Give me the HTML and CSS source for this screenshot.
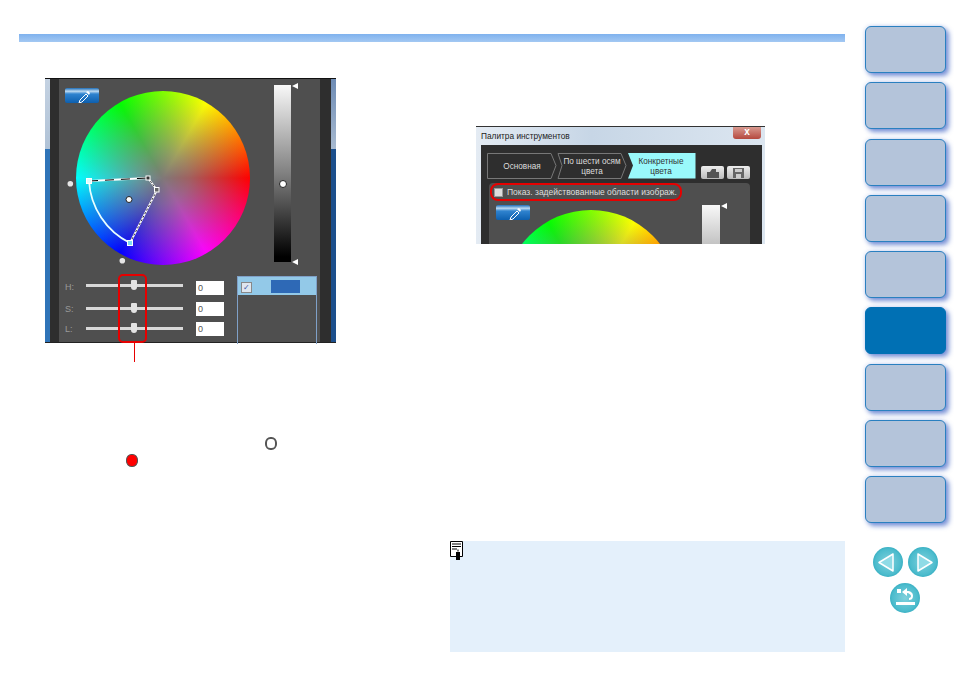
FILE: index.html
```html
<!DOCTYPE html>
<html lang="en">
<head>
    <meta charset="UTF-8">
    <title>Палитра инструментов</title>
    <link rel="stylesheet" href="styles.css">
</head>
<body>
    <div class="page">
        <div class="main">
            <div class="top-bar"></div>
            <div class="columns">
                <div class="col-left">
                    <div class="shot">
                        <div class="stripe stripe-left"></div>
                        <div class="dark-side"></div>
                        <div class="panel-body">
                            <div class="drop-btn drop-btn-main">
                                <svg width="34" height="15" viewBox="0 0 34 15"><path d="M15 12l6-6 2 2-6 6-3 1z" fill="none" stroke="#fff" stroke-width="1"/><path d="M21 4l2-1 2 2-1 2z" fill="#fff"/></svg>
                            </div>
                            <div class="wheel-row">
                                <div class="wheel">
                                    <svg class="wheel-marks" width="174" height="174" viewBox="0 0 174 174">
                                        <path d="M13 90L72 87" stroke="#fff" stroke-width="1.8" fill="none"/>
                                        <path d="M13 90L72 87" stroke="#000" stroke-width="1" stroke-dasharray="9 7" fill="none"/>
                                        <path d="M72 87L81 99L54 152" stroke="#fff" stroke-width="1.8" fill="none"/>
                                        <path d="M72 87L81 99L54 152" stroke="#000" stroke-width="0.8" stroke-dasharray="2 2" fill="none"/>
                                        <path d="M13 90A74 74 0 0 0 54 152" stroke="#e8ffff" stroke-width="1.8" fill="none"/>
                                        <rect x="10.5" y="87.5" width="5" height="5" fill="#dff" stroke="#fff"/>
                                        <rect x="51.5" y="149.5" width="5" height="5" fill="#7fdcf5" stroke="#fff"/>
                                        <rect x="70" y="85" width="4" height="4" fill="#333" stroke="#fff" />
                                        <rect x="78.5" y="96.5" width="4.5" height="4.5" fill="#666" stroke="#fff"/>
                                        <circle cx="53" cy="108.5" r="3" fill="#fff" stroke="#222"/>
                                        <circle cx="-5.7" cy="92.7" r="2.8" fill="#e6e6e6"/>
                                        <circle cx="46.3" cy="169.7" r="2.8" fill="#e6e6e6"/>
                                    </svg>
                                </div>
                                <div class="gray-bar">
                                    <span class="bar-arrow bar-arrow-top"></span>
                                    <span class="bar-knob"></span>
                                    <span class="bar-arrow bar-arrow-bottom"></span>
                                </div>
                            </div>
                            <div class="controls">
                                <div class="sliders">
                                    <div class="slider-row">
                                        <span class="slider-label">H:</span>
                                        <div class="track"><span class="thumb"></span></div>
                                        <div class="num">0</div>
                                    </div>
                                    <div class="slider-row">
                                        <span class="slider-label">S:</span>
                                        <div class="track"><span class="thumb"></span></div>
                                        <div class="num">0</div>
                                    </div>
                                    <div class="slider-row">
                                        <span class="slider-label">L:</span>
                                        <div class="track"><span class="thumb"></span></div>
                                        <div class="num">0</div>
                                    </div>
                                </div>
                                <div class="color-list">
                                    <div class="color-row">
                                        <span class="check-box">✓</span>
                                        <span class="swatch"></span>
                                    </div>
                                </div>
                            </div>
                        </div>
                        <div class="dark-side dark-side-right"></div>
                        <div class="stripe stripe-right"></div>
                        <div class="red-mark"></div>
                    </div>
                    <div class="red-line"></div>
                    <div class="icon-row icon-row-ring"><span class="ring-icon"></span></div>
                    <div class="icon-row icon-row-dot"><span class="red-icon"></span></div>
                </div>

                <div class="col-right">
                    <div class="window">
                        <div class="win-title">
                            <span>Палитра инструментов</span>
                            <span class="win-close">x</span>
                        </div>
                        <div class="win-inner">
                            <div class="tabs-row">
                                <svg class="tabs" width="209" height="26" viewBox="0 0 209 26">
                                    <path d="M0.5 0.5H64L69 12.500L64 25.500H0.500Z" fill="none" stroke="#777"/>
                                    <path d="M71 0.500H134L139 12.500L134 25.500H71L75 12.500Z" fill="none" stroke="#777"/>
                                    <path d="M141 0H208.500V25.500H141L146 12.500Z" fill="#99f9fb"/>
                                    <text x="35" y="16" class="tab-text" text-anchor="middle" fill="#ddd">Основная</text>
                                    <text x="105" y="11" class="tab-text" text-anchor="middle" fill="#ddd">По шести осям</text>
                                    <text x="105" y="21" class="tab-text" text-anchor="middle" fill="#ddd">цвета</text>
                                    <text x="174" y="11" class="tab-text" text-anchor="middle" fill="#333">Конкретные</text>
                                    <text x="174" y="21" class="tab-text" text-anchor="middle" fill="#333">цвета</text>
                                </svg>
                                <span class="tool-btn">
                                    <svg width="14" height="10" viewBox="0 0 14 10"><path d="M1 4h12v6H1zM4 4l2-3h4v3z" fill="#555"/></svg>
                                </span>
                                <span class="tool-btn">
                                    <svg width="11" height="10" viewBox="0 0 11 10"><path d="M0 0h11v10H0z" fill="#666"/><path d="M2 1h7v3H2zM3 6h5v4H3z" fill="#ccc"/></svg>
                                </span>
                            </div>
                            <div class="win-panel">
                                <div class="show-row">
                                    <span class="show-check"></span>
                                    <span class="show-text">Показ. задействованные области изображ.</span>
                                </div>
                                <div class="drop-btn drop-btn-win">
                                    <svg width="34" height="15" viewBox="0 0 34 15"><path d="M15 12l6-6 2 2-6 6-3 1z" fill="none" stroke="#fff" stroke-width="1"/><path d="M21 4l2-1 2 2-1 2z" fill="#fff"/></svg>
                                </div>
                                <div class="wheel wheel-win"></div>
                                <div class="gray-bar gray-bar-win">
                                    <span class="bar-arrow bar-arrow-top"></span>
                                </div>
                            </div>
                        </div>
                    </div>
                    <div class="note">
                        <svg width="14" height="19" viewBox="0 0 14 19">
                            <path d="M0.500 0.500H12.500V15.500H0.500Z" fill="#fff" stroke="#000"/>
                            <path d="M2 3h9M2 5.500h9M2 8h5" stroke="#000" fill="none"/>
                            <path d="M6 11h4v8H6z" fill="#000"/>
                            <path d="M7 8.500h2v2H7z" fill="#777"/>
                        </svg>
                    </div>
                </div>
            </div>
        </div>

        <div class="sidebar">
            <div class="nav-box"></div>
            <div class="nav-box"></div>
            <div class="nav-box"></div>
            <div class="nav-box"></div>
            <div class="nav-box"></div>
            <div class="nav-box active"></div>
            <div class="nav-box"></div>
            <div class="nav-box"></div>
            <div class="nav-box"></div>
            <div class="arrows">
                <span class="round-btn">
                    <svg width="30" height="30" viewBox="0 0 30 30"><path d="M6 15.500L20 7V24Z" fill="#8fdbe6" stroke="#fff" stroke-width="1.500" stroke-linejoin="round"/></svg>
                </span>
                <span class="round-btn">
                    <svg width="30" height="30" viewBox="0 0 30 30"><path d="M24 15.500L10 7V24Z" fill="#8fdbe6" stroke="#fff" stroke-width="1.500" stroke-linejoin="round"/></svg>
                </span>
            </div>
            <div class="arrows">
                <span class="round-btn">
                    <svg width="30" height="30" viewBox="0 0 30 30">
                        <path d="M7 6h4v4H7z" fill="#fff"/>
                        <path d="M12 9l5-4v3c4 0 6 2 6 5s-2 4-4 4v-2c1 0 2-1 2-2s-2-3-4-3v3z" fill="#fff"/>
                        <path d="M6 19h19v3H6z" fill="#fff"/>
                    </svg>
                </span>
            </div>
        </div>
    </div>
</body>
</html>
```

FILE: styles.css
```css
body {
    margin: 0;
    background: white;
    font-family: "Liberation Sans", Arial, sans-serif;
}
.page {
    display: flex;
    width: 954px;
    height: 674px;
    overflow: hidden;
}
.main {
    width: 826px;
    margin-left: 19px;
    padding-top: 34px;
}
.top-bar {
    height: 8px;
    background: linear-gradient(to bottom, #7fb2ee, #a3c8f2);
}
.columns {
    display: flex;
}
.col-left {
    width: 431px;
    padding-top: 36px;
}
.col-right {
    width: 395px;
}

/* left screenshot */
.shot {
    position: relative;
    display: flex;
    width: 291px;
    height: 265px;
    margin-left: 26px;
    border-top: 1px solid #111;
    border-bottom: 1px solid #222;
    box-sizing: border-box;
    background: #4f4f4f;
}
.stripe {
    width: 5px;
}
.stripe-left {
    background: linear-gradient(to bottom, #c4d2e2 0, #b0c2d6 70px, #2f74b8 70px);
}
.stripe-right {
    background: linear-gradient(to bottom, #6d8bb4 0, #a8bad0 70px, #1c4f8c 70px);
}
.dark-side {
    width: 9px;
    background: #2e2e2e;
}
.dark-side-right {
    width: 11px;
}
.panel-body {
    position: relative;
    width: 261px;
    background: #4f4f4f;
}
.drop-btn {
    position: absolute;
    left: 6px;
    top: 9px;
    width: 34px;
    height: 15px;
    border-radius: 2px;
    background: linear-gradient(to bottom, #1d6db8 0, #bcd9f0 22%, #2f83cf 40%, #0d5fae 100%);
}
.drop-btn svg {
    display: block;
}
.wheel-row {
    display: flex;
    align-items: flex-start;
    padding-left: 17px;
}
.wheel {
    position: relative;
    flex: none;
    width: 174px;
    height: 174px;
    margin-top: 12px;
    border-radius: 50%;
    background:
        radial-gradient(circle closest-side, #807878 0, rgba(128,128,128,0.75) 30%, rgba(128,128,128,0) 100%),
        conic-gradient(from 90deg, #f00, #f0f, #00f, #0ff, #0f0, #ff0, #f00);
}
.wheel-marks {
    position: absolute;
    left: 0;
    top: 0;
    overflow: visible;
}
.gray-bar {
    position: relative;
    flex: none;
    width: 17px;
    height: 177px;
    margin-top: 6px;
    margin-left: 24px;
    background: linear-gradient(to bottom, #f8f8f8, #808080 50%, #000 97%);
}
.bar-arrow {
    position: absolute;
    right: -7px;
    width: 0;
    height: 0;
    border-top: 3.500px solid transparent;
    border-bottom: 3.500px solid transparent;
    border-right: 6px solid #fff;
}
.bar-arrow-top {
    top: -2px;
}
.bar-arrow-bottom {
    bottom: -3px;
}
.bar-knob {
    position: absolute;
    left: 5px;
    top: 95px;
    width: 6px;
    height: 6px;
    border-radius: 50%;
    background: #fff;
    border: 1px solid #222;
}
.controls {
    display: flex;
    margin-top: 11px;
}
.sliders {
    width: 172px;
    padding-left: 6px;
    padding-top: 5px;
}
.slider-row {
    display: flex;
    align-items: center;
    height: 14px;
    margin-bottom: 6.500px;
    color: #9a9a9a;
    font-size: 9px;
}
.slider-label {
    width: 21px;
}
.slider-row:first-child .slider-label {
    margin-top: -3px;
}
.track {
    position: relative;
    width: 97px;
    height: 3px;
    margin-top: -1px;
    background: #d8d8d8;
}
.slider-row:first-child .track {
    margin-top: -5px;
}
.thumb {
    position: absolute;
    left: 45px;
    top: -4px;
    width: 6px;
    height: 10px;
    border-radius: 1px 1px 3px 3px;
    background: #e2e2e2;
}
.num {
    width: 26px;
    height: 14px;
    margin-left: 13px;
    padding-left: 2px;
    background: white;
    color: #555;
    font-size: 9px;
    line-height: 14px;
}
.color-list {
    width: 78px;
    height: 67px;
    border: 1px solid #7fa0c8;
    border-bottom: none;
}
.color-row {
    display: flex;
    align-items: center;
    height: 18px;
    padding-left: 3px;
    background: #93c9e8;
}
.check-box {
    width: 9px;
    height: 9px;
    margin-top: 3px;
    background: #dfe6ee;
    border: 0.500px solid #888;
    color: #3a55a8;
    font-size: 8px;
    line-height: 9px;
    text-align: center;
}
.swatch {
    width: 29px;
    height: 13px;
    margin-left: 19px;
    background: #2e69b6;
}
.red-mark {
    position: absolute;
    left: 73px;
    top: 195px;
    width: 25px;
    height: 65px;
    border: 2px solid #e60000;
    border-radius: 5px;
}
.red-line {
    width: 1px;
    height: 19px;
    margin-left: 115px;
    background: #e60000;
}
.icon-row {
    display: flex;
}
.icon-row-ring {
    padding-left: 246px;
    margin-top: 75px;
}
.icon-row-dot {
    padding-left: 107px;
    margin-top: 4px;
}
.ring-icon {
    box-sizing: border-box;
    width: 12px;
    height: 13px;
    border: 2px solid #555;
    border-radius: 45%;
    background: white;
}
.red-icon {
    box-sizing: border-box;
    width: 12px;
    height: 13px;
    border: 1.500px solid #555;
    border-radius: 45%;
    background: #f00;
}

/* right screenshot */
.window {
    box-sizing: border-box;
    width: 289px;
    height: 118px;
    margin-top: 84px;
    margin-left: 26px;
    border-top: 1px solid #333;
    background: linear-gradient(to right, #e4ebf3, #c7d6e6 40%, #dce6f0);
    overflow: hidden;
}
.win-title {
    display: flex;
    justify-content: space-between;
    height: 18px;
    padding-left: 5px;
    color: #222;
    font-size: 8.300px;
    line-height: 19px;
}
.win-close {
    width: 28px;
    height: 12px;
    margin-right: 4px;
    border-radius: 0 0 3px 3px;
    background: linear-gradient(to bottom, #d99a90, #b5483e);
    color: white;
    font-size: 10px;
    font-weight: bold;
    line-height: 10px;
    text-align: center;
}
.win-inner {
    height: 100px;
    margin: 0 3px 0 5px;
    padding: 8px 0 0 6px;
    background: #2e2e2e;
    box-sizing: border-box;
}
.tabs-row {
    display: flex;
    align-items: flex-end;
    gap: 3px;
}
.tabs {
    display: block;
    margin-right: 2px;
}
.tab-text {
    font-family: "Liberation Sans", Arial, sans-serif;
    font-size: 8.200px;
}
.tool-btn {
    display: flex;
    align-items: center;
    justify-content: center;
    width: 23px;
    height: 13px;
    border-radius: 2px;
    background: linear-gradient(to bottom, #eee, #bbb);
}
.win-panel {
    position: relative;
    width: 261px;
    height: 70px;
    margin-top: 4px;
    margin-left: 2px;
    border-radius: 4px 4px 0 0;
    background: #4f4f4f;
    overflow: hidden;
}
.show-row {
    display: flex;
    align-items: center;
    box-sizing: border-box;
    width: 192px;
    height: 18px;
    margin-left: 1px;
    padding-left: 2px;
    border: 2.500px solid #e60000;
    border-radius: 8px;
}
.show-check {
    flex: none;
    box-sizing: border-box;
    width: 9px;
    height: 9px;
    margin-right: 4px;
    background: #ddd;
    border: 1px solid #999;
}
.show-text {
    color: #ddd;
    font-size: 8.500px;
    white-space: nowrap;
}
.drop-btn-win {
    left: 7px;
    top: 22px;
}
.wheel-win {
    margin-top: 9px;
    margin-left: 15px;
}
.gray-bar-win {
    position: absolute;
    left: 213px;
    top: 22px;
    width: 18px;
    margin: 0;
}
.note {
    height: 111px;
    margin-top: 297px;
    background: #e4f0fb;
}
.note svg {
    display: block;
}

/* side navigation */
.sidebar {
    width: 81px;
    margin-left: 20px;
    padding-top: 26px;
}
.nav-box {
    box-sizing: border-box;
    height: 47px;
    margin-bottom: 9.300px;
    background: #b4c4da;
    border: 1.500px solid #2a80c0;
    border-radius: 6px;
    box-shadow: 3px 3px 5px rgba(40,80,190,0.6), 0 0 4px rgba(60,100,200,0.25);
}
.nav-box.active {
    background: #0070b4;
    border-color: #0070b4;
}
.arrows {
    display: flex;
    justify-content: center;
    gap: 5px;
    padding-right: 1px;
}
.nav-box + .arrows {
    margin-top: 24px;
}
.arrows + .arrows {
    margin-top: 6px;
}
.round-btn {
    width: 30px;
    height: 30px;
    border-radius: 50%;
    background: radial-gradient(circle at 50% 50%, #7fd0dc 0, #4cbccd 60%, #0e93aa 100%);
}
.round-btn svg {
    display: block;
}
```
